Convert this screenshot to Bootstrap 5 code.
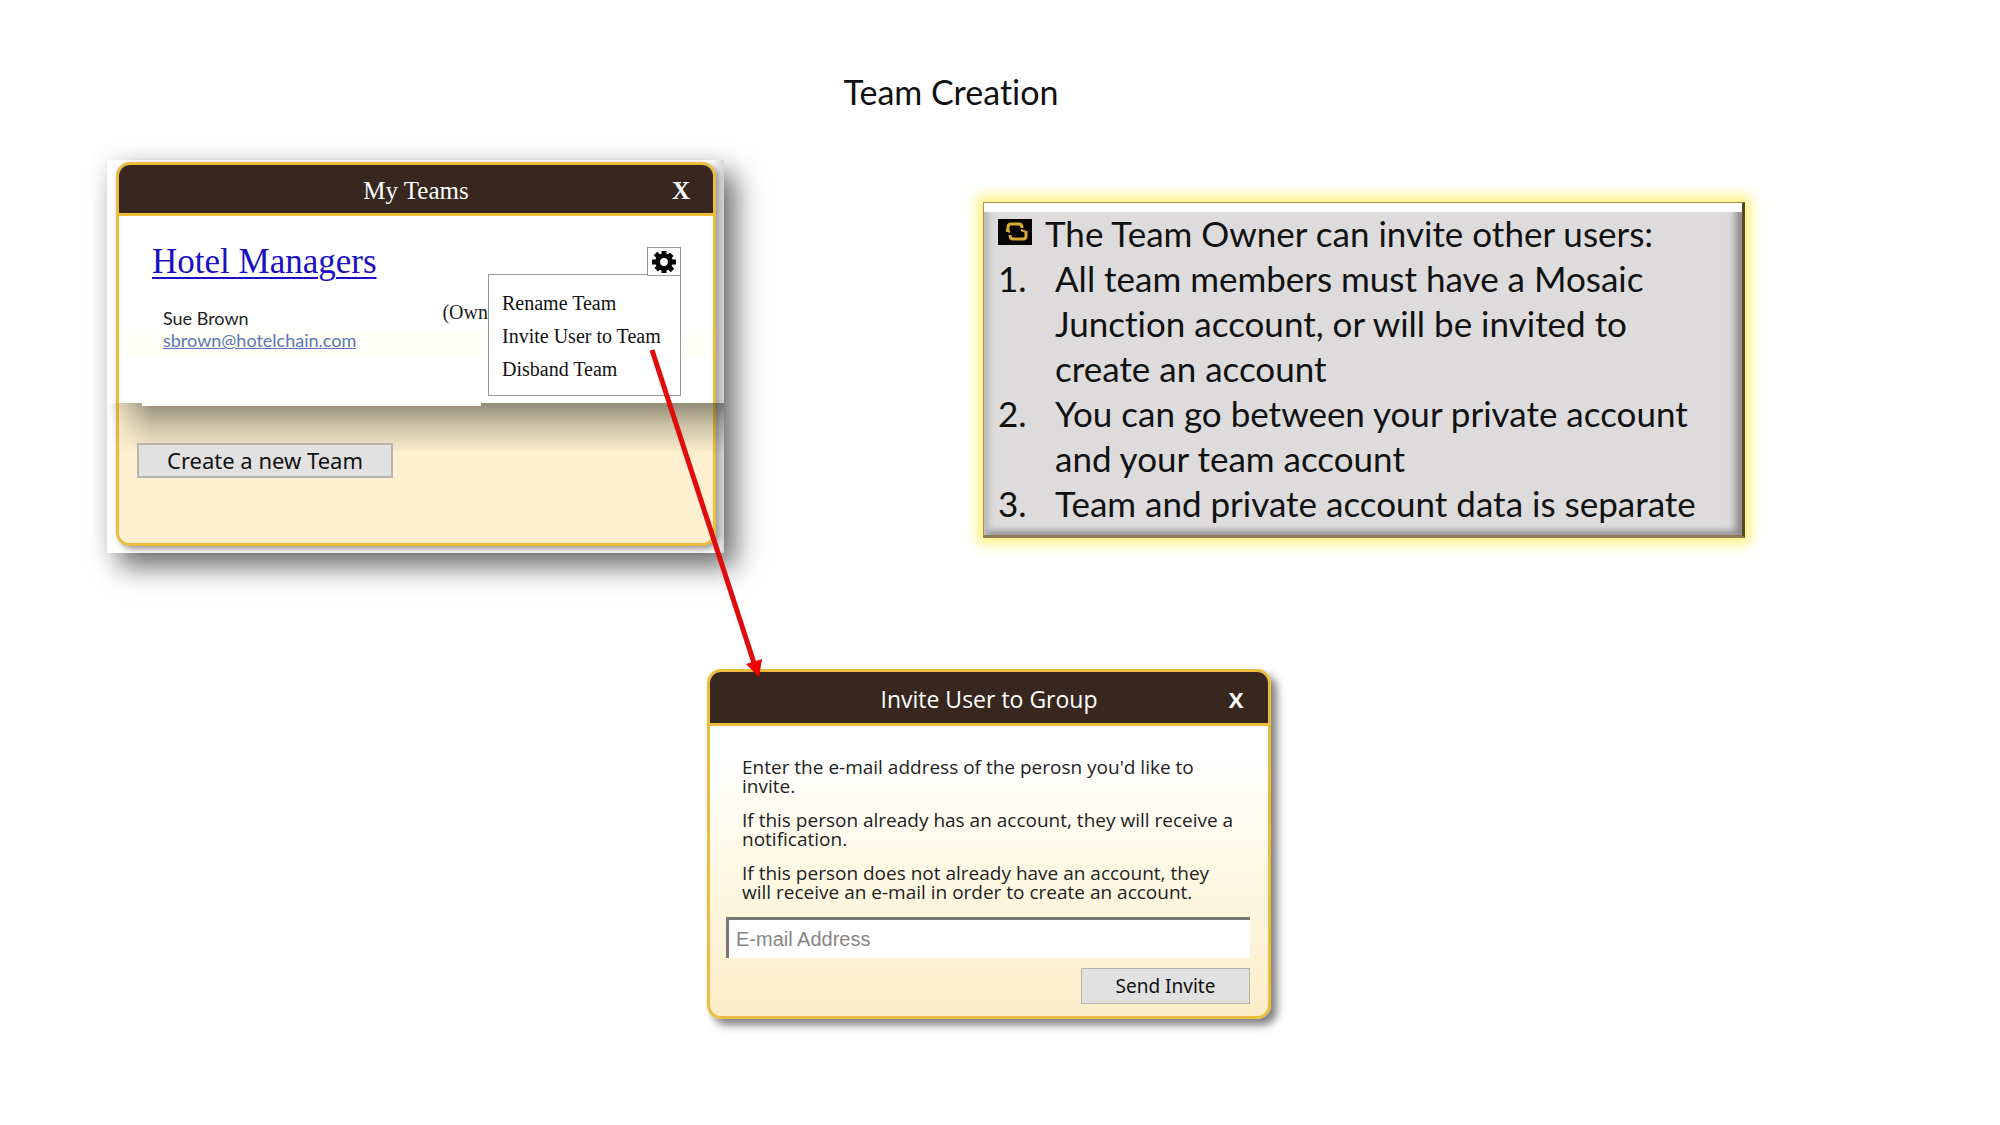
<!DOCTYPE html>
<html lang="en">
<head>
<meta charset="utf-8">
<meta name="viewport" content="width=device-width, initial-scale=1">
<title>Team Creation</title>
<link href="https://cdn.jsdelivr.net/npm/bootstrap@5.3.0/dist/css/bootstrap.min.css" rel="stylesheet">
<style>
  :root { --gold: #ecbd3c; --cocoa: #38271e; --cream: #fdefd0; }
  body { background: #fff; color: #111; font-family: Lato, sans-serif; font-variant-ligatures: none; }
  .slide { padding: 72px 0 80px; }
  .slide-title { font-size: 34px; line-height: 40px; font-weight: 400; margin: 0 98px 48px 0; }
  .top-row { padding-left: 107px; gap: 259px; }

  /* dialog windows */
  .dialog { border: 3px solid var(--gold); border-radius: 14px; background: transparent; color: #222; }
  .dialog-head { background: var(--cocoa); color: #fff; border-bottom: 3px solid var(--gold); border-radius: 11px 11px 0 0; padding: 4px 17px 0; }
  .dialog-head h2 { margin: 0; font-weight: 400; }
  .dialog-head button, .dialog-head i { width: 30px; padding: 0; border: 0; background: none; color: #fff; font-weight: 700; }
  .plain-btn { background: #e1e1e1; border: 2px solid #b5b5ae; border-radius: 0; color: #111; padding: 0; font-family: "Noto Sans", sans-serif; }

  .team-frame { flex: 0 1 617px; padding: 2px 8px 7px 9px; background: linear-gradient(90deg, #fff 98%, #d5d5d5); box-shadow: 12px 14px 26px 0 rgba(0,0,0,.55), 0 0 22px rgba(0,0,0,.08); }
  .team-frame .dialog { box-shadow: 3px 3px 6px rgba(0,0,0,.4); background: #fff; }
  .serif { font-family: "Liberation Serif", serif; }
  .team-frame .dialog-head { height: 51px; font-size: 25px; }
  .team-frame .dialog-head h2 { font-size: 25px; }
  .team-list { height: 187px; padding: 26px 32px 0 33px; background: linear-gradient(#fff 60%, #fffdf5 65%, #fffdf5 75%, #fff 76%); }
  .team-link { font-size: 35px; line-height: 40px; color: #1a0fc4; text-decoration-thickness: 2px; text-underline-offset: 4px; }
  .member { font-family: Lato, sans-serif; font-size: 18px; line-height: 22px; margin: 25px 0 0 11px; }
  .member a { color: #5877b9; }
  .owner { font-size: 20px; line-height: 24px; margin: 18px 193px 0 0; }
  .team-foot { height: 140px; padding: 40px 18px 0; background: var(--cream); border-radius: 0 0 11px 11px; }
  .team-foot::before { content: ""; position: absolute; left: -12px; right: -11px; top: 0; height: 50px; background: linear-gradient(rgba(40,40,30,.5), rgba(40,40,30,.25) 40%, rgba(40,40,30,0)); -webkit-mask-image: linear-gradient(90deg, transparent, #000 45px); mask-image: linear-gradient(90deg, transparent, #000 45px); }
  .team-foot::after { content: ""; position: absolute; left: 23px; width: 339px; top: 0; height: 3px; background: #fff; }
  .team-foot button { width: 256px; height: 35px; font-size: 22px; line-height: 31px; position: relative; }

  .gear { right: 32px; top: 31px; width: 34px; height: 29px; border: 1px solid #999; background: #fff; padding: 0; z-index: 1; line-height: 0; }
  .team-menu { right: 32px; top: 58px; width: 193px; height: 122px; border: 1px solid #999; background: #fff; padding: 12px 13px; margin: 0; list-style: none; font-size: 20px; line-height: 33px; }
  .team-menu a { color: #111; text-decoration: none; white-space: nowrap; }
  .arrow { left: 640px; top: 340px; z-index: 3; pointer-events: none; }

  /* note */
  .note { flex: 0 1 762px; margin-top: 42px; padding: 8px 15px 0 14px; height: 336px; font-size: 35px; line-height: 45px;
    background: #dddbdc; border: 1px solid #a98d45; border-right: 3px solid #55491f; border-bottom: 3px solid #8b7b56;
    box-shadow: 0 0 12px 6px #fdf27e, inset 0 9px 1px #fff, inset 7px 0 6px -2px #bab9ba, inset -8px 0 8px -2px #858385, inset 0 -6px 6px -2px #949294; }
  .note p { gap: 13px; }
  .note svg { margin-bottom: 4px; }
  .note ol { padding: 0; margin: 0; list-style: none; counter-reset: step; }
  .note li { counter-increment: step; padding-left: 57px; position: relative; }
  .note li::before { content: counter(step) "."; position: absolute; left: 0; }

  /* invite dialog */
  .invite { width: 564px; max-width: 100%; margin: 116px 0 0 707px; font-family: "Open Sans", sans-serif; background: linear-gradient(#fff 25%, #fef8e3 60%, #fdedca); box-shadow: 6px 6px 9px rgba(0,0,0,.5); }
  .invite .dialog-head { height: 54px; font-size: 22px; }
  .invite .dialog-head h2 { font-size: 23px; }
  .invite form { padding: 32px 18px 12px 16px; }
  .invite p { font-size: 19px; line-height: 19px; margin: 0 10px 15px 16px; }
  .invite input { height: 41px; border: 0 solid #777; border-width: 3px 0 0 3px; border-radius: 0; padding: 0 7px; font-family: "Liberation Sans", sans-serif; font-size: 20px; background: #fff; }
  .invite input::placeholder { color: #858585; }
  .invite form button { width: 169px; height: 36px; margin-top: 10px; font-size: 19px; border-width: 1px; }
</style>
</head>
<body>
<main class="slide position-relative">
  <h1 class="slide-title text-center">Team Creation</h1>

  <div class="top-row d-flex align-items-start">
    <section class="team-frame">
      <div class="dialog card serif">
        <header class="dialog-head d-flex align-items-center">
          <i></i><h2 class="flex-grow-1 text-center">My Teams</h2>
          <button type="button" aria-label="Close">X</button>
        </header>
        <div class="team-list position-relative">
          <a class="team-link" href="#">Hotel Managers</a>
          <div class="d-flex justify-content-between">
            <div class="member">Sue Brown<br><a href="#">sbrown@hotelchain.com</a></div>
            <div class="owner">(Own</div>
          </div>
          <button class="gear position-absolute" type="button" aria-label="Team settings">
            <svg width="26" height="24" viewBox="-13 -12 26 24"><g fill="#000"><g id="t"><rect x="-2.5" y="-11" width="5" height="22"/><rect x="-12" y="-2.5" width="24" height="5"/></g><use href="#t" transform="rotate(45)"/></g><circle r="6.2" fill="none" stroke="#000" stroke-width="5"/><circle r="3.9" fill="#fff"/></svg>
          </button>
          <ul class="team-menu position-absolute">
            <li><a href="#">Rename Team</a></li>
            <li><a href="#">Invite User to Team</a></li>
            <li><a href="#">Disband Team</a></li>
          </ul>
        </div>
        <div class="team-foot position-relative">
          <button class="plain-btn" type="button">Create a new Team</button>
        </div>
      </div>
    </section>

    <section class="note">
      <p class="d-flex align-items-center m-0">
        <svg width="34" height="26" viewBox="0 0 34 26"><rect width="34" height="26" fill="#070503"/><g fill="none" stroke="#d6aa35" stroke-width="3"><path d="M10 13V8q0-3 3-3h8q3 0 3 4M28 12v5q0 3-3 3H15q-3 0-3-4"/><path d="M8 11l4 2M23 11l5 2" stroke-width="2"/></g></svg>
        <span>The Team Owner can invite other users:</span>
      </p>
      <ol>
        <li>All team members must have a Mosaic Junction account, or will be invited to create an account</li>
        <li>You can go between your private account and your team account</li>
        <li>Team and private account data is separate</li>
      </ol>
    </section>
  </div>

  <section class="dialog card invite">
    <header class="dialog-head d-flex align-items-center">
      <i></i><h2 class="flex-grow-1 text-center">Invite User to Group</h2>
      <button type="button" aria-label="Close">X</button>
    </header>
    <form class="d-flex flex-column">
      <p>Enter the e-mail address of the perosn you'd like to invite.</p>
      <p>If this person already has an account, they will receive a notification.</p>
      <p>If this person does not already have an account, they will receive an e-mail in order to create an account.</p>
      <input class="w-100" type="email" placeholder="E-mail Address" aria-label="E-mail Address">
      <button class="plain-btn align-self-end" type="button">Send Invite</button>
    </form>
  </section>

  <svg class="arrow position-absolute" width="130" height="345" viewBox="0 0 130 345"><path d="M12 10L115 326" stroke="#e00b0b" stroke-width="5"/><path d="M119 337L106 324L122 319Z" fill="#f20000"/></svg>
</main>
<script src="https://cdn.jsdelivr.net/npm/bootstrap@5.3.0/dist/js/bootstrap.bundle.min.js"></script>
</body>
</html>
